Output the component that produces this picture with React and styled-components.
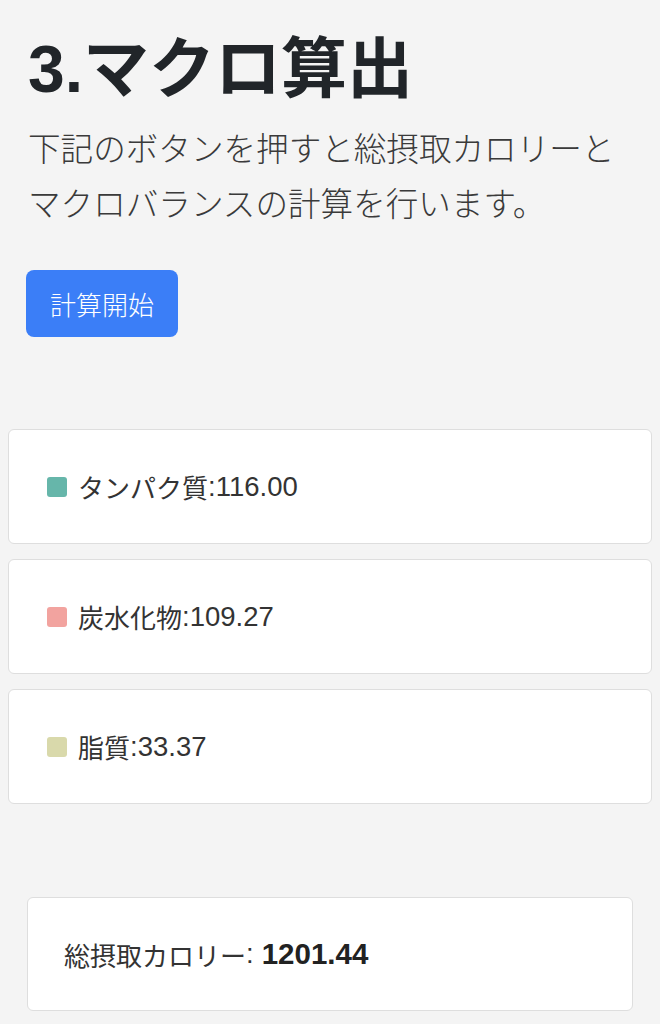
import React from "react";
import styled, { createGlobalStyle } from "styled-components";

const GlobalStyle = createGlobalStyle`
  html, body {
    margin: 0;
    padding: 0;
    background: #f4f4f4;
  }
  body {
    font-family: "Liberation Sans", "Noto Sans CJK JP", sans-serif;
    color: #212529;
  }
  * { box-sizing: border-box; }
`;

const Page = styled.div`
  display: flex;
  flex-direction: column;
  padding-bottom: 40px;
`;

const Intro = styled.section`
  display: flex;
  flex-direction: column;
  align-items: flex-start;
  padding: 29px 28px 0;
`;

const Title = styled.h1`
  margin: 0;
  font-size: 66px;
  line-height: 80px;
  font-weight: 700;
  color: #212529;
`;

const Lead = styled.p`
  margin: 13px 0 0;
  font-size: 32.6px;
  line-height: 55px;
  font-weight: 300;
  color: #3a3a3a;
`;

const StartButton = styled.button`
  margin: 38px 0 0 -2px;
  width: 152px;
  height: 67px;
  border: none;
  border-radius: 8px;
  background: #3b7ef7;
  color: #ffffff;
  font-family: inherit;
  font-size: 26px;
  font-weight: 300;
  display: flex;
  align-items: center;
  justify-content: center;
  padding: 0;
`;

const MacroList = styled.div`
  display: flex;
  flex-direction: column;
  gap: 15px;
  margin: 92px 8px 0;
`;

const Card = styled.div`
  background: #ffffff;
  border: 1.5px solid #dedede;
  border-radius: 6px;
  height: ${(p) => p.$height || 115}px;
  display: flex;
  align-items: center;
  padding-left: ${(p) => p.$pad || 38}px;
  font-size: 26px;
  color: #333333;
`;

const Swatch = styled.span`
  width: 20px;
  height: 20px;
  border-radius: 3px;
  background: ${(p) => p.$color};
  margin-right: 11px;
  flex: none;
`;

const Value = styled.span`
  font-size: 27.5px;
`;

const TotalWrap = styled.div`
  margin: 93px 27px 0;
`;

const Strong = styled.strong`
  font-size: 29.5px;
  font-weight: 700;
  color: #222222;
  margin-left: 8px;
`;

const macros = [
  { label: "タンパク質", value: "116.00", color: "#66b6aa" },
  { label: "炭水化物", value: "109.27", color: "#f2a39f" },
  { label: "脂質", value: "33.37", color: "#d9d9ab" },
];

export default function App() {
  return (
    <>
      <GlobalStyle />
      <Page>
        <Intro>
          <Title>3.マクロ算出</Title>
          <Lead>
            下記のボタンを押すと総摂取カロリーと
            <br />
            マクロバランスの計算を行います。
          </Lead>
          <StartButton>計算開始</StartButton>
        </Intro>
        <MacroList>
          {macros.map((m) => (
            <Card key={m.label}>
              <Swatch $color={m.color} />
              {m.label}
              <Value>:{m.value}</Value>
            </Card>
          ))}
        </MacroList>
        <TotalWrap>
          <Card $height={114} $pad={36}>
            総摂取カロリー<Value>:</Value>
            <Strong>1201.44</Strong>
          </Card>
        </TotalWrap>
      </Page>
    </>
  );
}
